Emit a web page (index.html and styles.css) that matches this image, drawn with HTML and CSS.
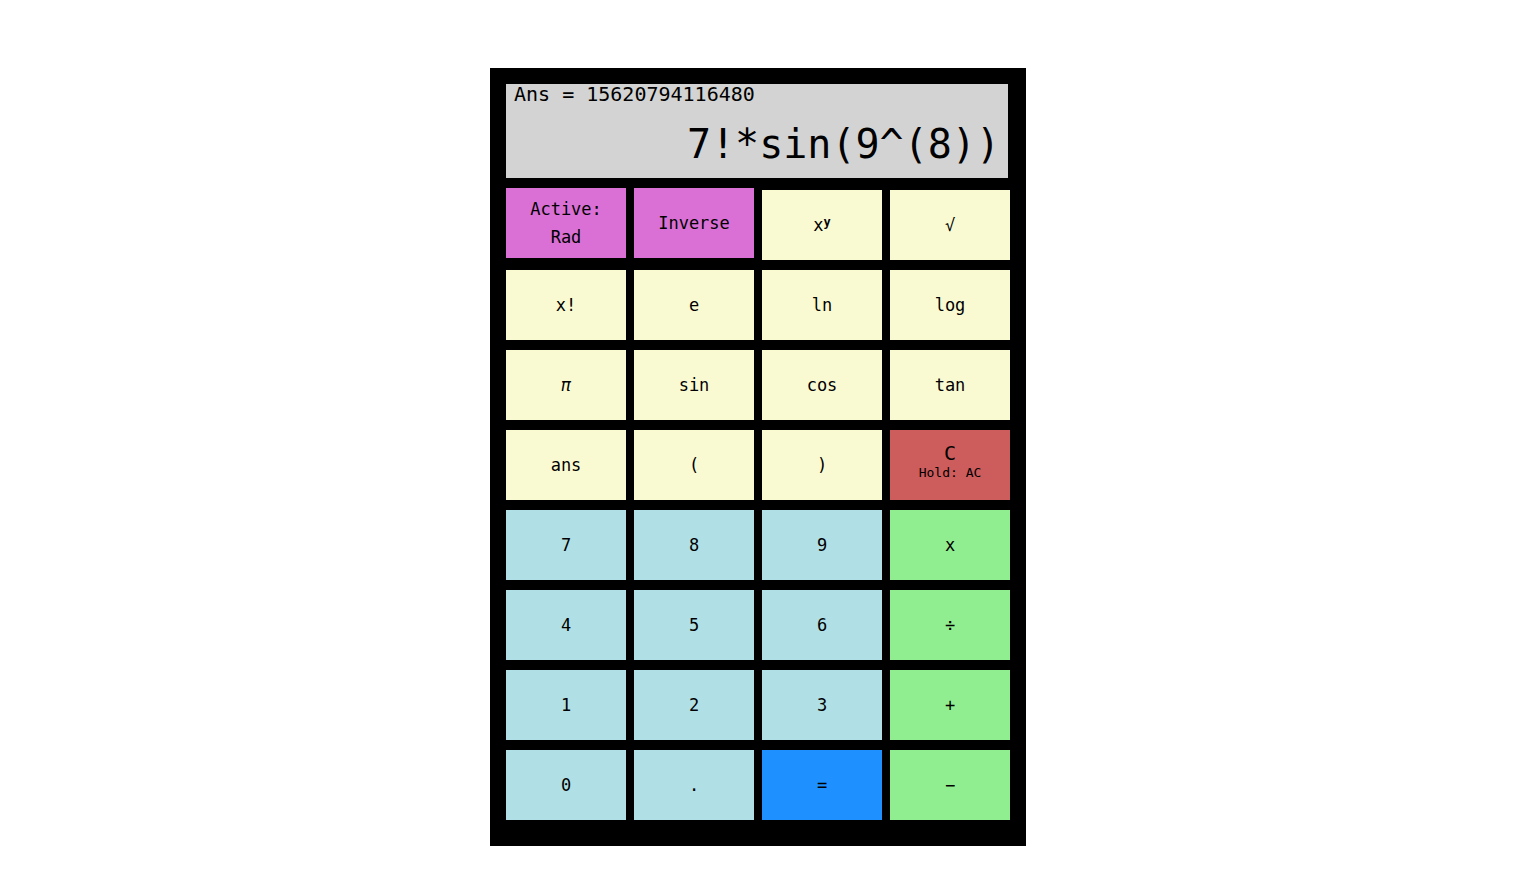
FILE: index.html
```html
<!DOCTYPE html>
<html lang="en">
<head>
	<title>Calculator</title>
	<link rel="stylesheet" href="styles.css">
</head>

<body>
	<div id="calculator">
		<div id="display">
			<p id="answer">Ans = 15620794116480</p>
			<p id="expression">7!*sin(9^(8))</p>
		</div>

		<div id="keys">
			<button class="key mode two-line">Active:<br>Rad</button>
			<button class="key mode">Inverse</button>
			<button class="key func"><span>x<sup>y</sup></span></button>
			<button class="key func">√</button>

			<button class="key func">x!</button>
			<button class="key func">e</button>
			<button class="key func">ln</button>
			<button class="key func">log</button>

			<button class="key func"><i>π</i></button>
			<button class="key func">sin</button>
			<button class="key func">cos</button>
			<button class="key func">tan</button>

			<button class="key func">ans</button>
			<button class="key func">(</button>
			<button class="key func">)</button>
			<button class="key clear">
				<span class="clear-main">C</span>
				<span class="clear-hold">Hold: AC</span>
			</button>

			<button class="key num">7</button>
			<button class="key num">8</button>
			<button class="key num">9</button>
			<button class="key op">x</button>

			<button class="key num">4</button>
			<button class="key num">5</button>
			<button class="key num">6</button>
			<button class="key op">÷</button>

			<button class="key num">1</button>
			<button class="key num">2</button>
			<button class="key num">3</button>
			<button class="key op">+</button>

			<button class="key num">0</button>
			<button class="key num">.</button>
			<button class="key equals">=</button>
			<button class="key op">−</button>
		</div>
	</div>
</body>
</html>
```

FILE: styles.css
```css
body {
	margin: 0;
	padding: 0;
	background: white;
	font-family: 'DejaVu Sans Mono', 'Liberation Mono', monospace;
}

#calculator {
	width: 504px;
	margin: 68px 0 0 490px;
	padding: 16px 16px 26px;
	background: black;
}

#display {
	width: 502px;
	height: 94px;
	box-sizing: border-box;
	padding: 0 8px;
	background: #d3d3d3;
	margin-bottom: 12px;
}

#display p {
	margin: 0;
}

#answer {
	font-size: 20px;
	line-height: 20px;
}

#expression {
	margin-top: 20px !important;
	font-size: 40px;
	line-height: 40px;
	text-align: right;
}

#keys {
	display: grid;
	grid-template-columns: repeat(4, 120px);
	grid-auto-rows: 70px;
	column-gap: 8px;
	row-gap: 10px;
}

.key {
	border: none;
	padding: 0;
	margin: 0;
	font-family: inherit;
	font-size: 17px;
	color: black;
	display: flex;
	flex-direction: column;
	align-items: center;
	justify-content: center;
}

.key sup {
	font-size: 12px;
	font-weight: bold;
	line-height: 0;
	vertical-align: 5px;
}

.mode {
	background: #da70d6;
	margin-top: -2px;
	margin-bottom: 2px;
}

.two-line {
	display: block;
	line-height: 28px;
}

.func {
	background: #fafad2;
}

.clear {
	background: #cd5c5c;
	padding-bottom: 5px;
}

.clear-main {
	font-size: 20px;
	line-height: 20px;
}

.clear-hold {
	font-size: 13px;
	line-height: 20px;
}

.num {
	background: #b0e0e6;
}

.op {
	background: #90ee90;
}

.equals {
	background: #1e90ff;
}
```
